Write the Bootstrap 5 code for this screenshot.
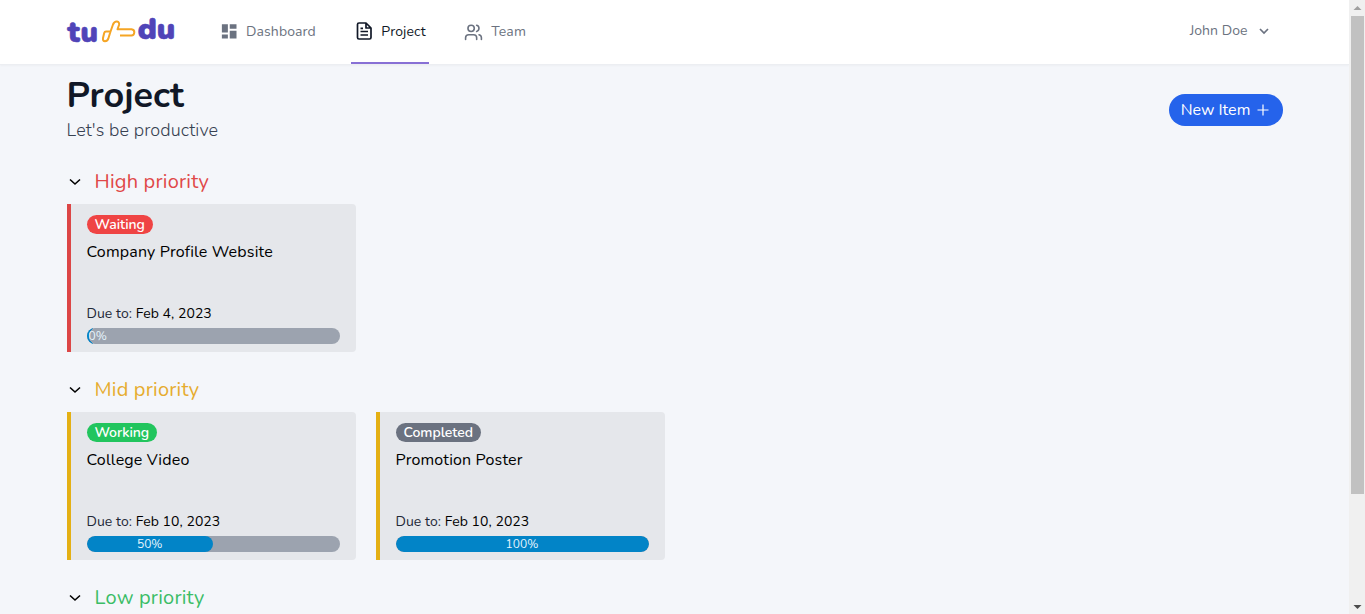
<!DOCTYPE html>
<html lang="en">
<head>
<meta charset="utf-8">
<meta name="viewport" content="width=device-width, initial-scale=1">
<title>Project</title>
<link href="https://cdn.jsdelivr.net/npm/bootstrap@5.3.0/dist/css/bootstrap.min.css" rel="stylesheet">
<style>
body{font-family:Nunito,Lato,sans-serif;background:#f4f6fa;color:#000;height:614px;overflow:hidden}
.page{width:1349px;height:614px;overflow:hidden}
.wrap{width:1216px;margin:0 0 0 66.5px}
.topbar{height:65px;background:#fff;border-bottom:1px solid #eceef2;box-shadow:0 1px 2px rgba(0,0,0,.03)}
.logo{width:109px;height:30px;display:block;overflow:visible}
.tab{height:64px;font-size:14px;color:#6b7280;border-bottom:2px solid transparent;text-decoration:none;letter-spacing:.1px}
.tab.on{color:#111827;border-color:#8870d5}
.tab,.who{font-weight:380}
.who{font-size:14px;color:#6b7280;letter-spacing:.05px}
.big{font-size:36px;line-height:40px;font-weight:700;color:#111827}
.sub{font-size:18px;line-height:28px;color:#374151;font-weight:330;letter-spacing:.1px}
.newbtn{width:114px;height:32px;background:#2563eb;color:#fff;font-size:16px;border:0}
.head{height:28px;font-size:20px;line-height:28px;letter-spacing:.2px}
.head svg{width:16px;height:16px;margin:0 13px 0 -1px}
.head span{position:relative;top:1px}
.red{color:#e04848}.yel{color:#e6ac2e}.grn{color:#3bbd66}
.tiles{display:grid;grid-template-columns:repeat(4,289px);gap:20px;margin-top:9px}
.tile{height:148px;background:#e5e7eb;border-left:4px solid;border-radius:0 4px 4px 0;padding:11px 16px 8px;color:#000}
.tile.r{border-color:#dc4646}.tile.y{border-color:#e4b014}
.pill{height:19px;line-height:19px;font-size:14px;font-weight:630;letter-spacing:-.03px;color:#fff;background:#ef4444}
.pill.green{background:#22c55e}.pill.gray{background:#6b7280}
.name{font-size:16px;line-height:24px;margin-top:6px;letter-spacing:.16px}
.due{font-size:14px;line-height:20px;margin-bottom:4px;letter-spacing:.06px}
.due span{color:#1f2937;font-weight:380}
.bar{height:16px;background:#9ca3af;border-radius:8px;flex-shrink:0;overflow:hidden}
.fill{height:16px;background:#0284c7;border-radius:8px;font-size:12px;line-height:16px;color:#e6f5fd;text-align:center}
.fill.zero{background:radial-gradient(circle at 10px 8px,#9ca3af 8px,#0284c7 8.500px);width:6px;border-radius:0;padding-left:2px;text-align:left}
.scroll{position:fixed;right:0;top:0;width:16px;height:614px;background:#f0f0f0}
.thumb{width:13px;height:478px;background:#c1c1c1;margin-left:2px}
</style>
</head>
<body>
<div class="page">
<header class="topbar">
 <div class="wrap d-flex justify-content-between">
  <nav class="d-flex">
   <a href="#" class="pt-3 text-decoration-none"><svg class="logo" viewBox="67 16 109 30"><g fill="#5044b8" stroke="#5044b8" stroke-width=".6" font-family="Nunito,Lato,sans-serif" font-weight="900" font-size="29"><text x="67.500" y="41.500" textLength="30.500" lengthAdjust="spacing">tu</text><text x="137.800" y="39" textLength="37.500" lengthAdjust="spacingAndGlyphs">du</text></g><path d="M106 31.500H110.500L108.500 38Q107.700 41.200 105 41.200Q102.500 41.200 103 38L104.200 33Q104.600 31.500 106 31.500ZM110 33L113 24.500Q114.300 21.300 117 21.500Q119.700 22 119 25L117.500 29.300H131.500Q134.500 29.600 134.300 32.500Q134 35.500 131.500 35.500H120" fill="none" stroke="#f5a524" stroke-width="2" stroke-linejoin="round"/></svg></a>
   <a href="#" class="tab d-flex align-items-center" style="margin-left:44.500px"><svg width="18" height="18" viewBox="0 0 24 24" fill="#6b7280" class="me-2"><path d="M2.500 3H10.500V14H2.500zM13 3h9v6h-9zM2.500 16.500H10.500V22H2.500zM13 11.500h9V22h-9z"/></svg><span>Dashboard</span></a>
   <a href="#" class="tab on d-flex align-items-center" style="margin-left:35.500px;width:78px;padding-left:4px"><svg width="18" height="20" viewBox="0 0 18 20" fill="none" stroke="#111827" stroke-width="1.700" class="me-2"><path d="M4 2H11L16 7V16.500Q16 18 14.500 18H4Q2.500 18 2.500 16.500V3.500Q2.500 2 4 2ZM11 2V7H16M5.500 7.300H8M5.500 10.500H13M5.500 14H13" stroke-linejoin="round"/></svg><span>Project</span></a>
   <a href="#" class="tab d-flex align-items-center" style="margin-left:35px"><svg width="19" height="19" viewBox="0 0 24 24" fill="none" stroke="#6b7280" stroke-width="2" stroke-linecap="round" class="me-2"><path d="M2 22V20a4 4 0 0 1 4-4h6a4 4 0 0 1 4 4v2M16 4.200a4 4 0 0 1 0 7.700M22 22v-2a4 4 0 0 0-3-3.800"/><circle cx="9" cy="8" r="4"/></svg><span>Team</span></a>
  </nav>
  <div class="who d-flex align-items-center" style="margin-right:14px;height:61px"><span>John Doe</span><svg width="10" height="8" viewBox="0 0 10 8" fill="none" stroke="#6b7280" stroke-width="1.700" style="margin-left:11px"><path d="M1 2L5 6L9 2"/></svg></div>
 </div>
</header>
<main class="wrap">
 <div class="d-flex justify-content-between" style="padding-top:11px;height:102px">
  <div><h1 class="big m-0">Project</h1><p class="sub m-0">Let's be productive</p></div>
  <button class="newbtn rounded-pill p-0 d-flex align-items-center justify-content-center" style="margin-top:18px"><span>New Item</span><svg width="12" height="12" viewBox="0 0 12 12" stroke="#fff" stroke-width="1.200" style="margin:0 1px 0 7px"><path d="M6 .5v11M.5 6h11"/></svg></button>
 </div>
 <section style="height:208px">
  <h2 class="head red m-0 fw-normal d-flex align-items-center"><svg viewBox="0 0 16 16" fill="none" stroke="#000" stroke-width="1.600"><path d="M4 6.500L9 11L14 6.500"/></svg><span>High priority</span></h2>
  <div class="tiles">
   <article class="tile r d-flex flex-column align-items-start"><span class="pill rounded-pill px-2">Waiting</span><div class="name">Company Profile Website</div><div class="due mt-auto"><span>Due to:</span> <b class="fw-normal">Feb 4, 2023</b></div><div class="bar w-100"><div class="fill zero">0%</div></div></article>
  </div>
 </section>
 <section style="height:208px">
  <h2 class="head yel m-0 fw-normal d-flex align-items-center"><svg viewBox="0 0 16 16" fill="none" stroke="#000" stroke-width="1.600"><path d="M4 6.500L9 11L14 6.500"/></svg><span>Mid priority</span></h2>
  <div class="tiles">
   <article class="tile y d-flex flex-column align-items-start"><span class="pill green rounded-pill px-2">Working</span><div class="name">College Video</div><div class="due mt-auto"><span>Due to:</span> <b class="fw-normal">Feb 10, 2023</b></div><div class="bar w-100"><div class="fill" style="width:50%">50%</div></div></article>
   <article class="tile y d-flex flex-column align-items-start"><span class="pill gray rounded-pill px-2">Completed</span><div class="name">Promotion Poster</div><div class="due mt-auto"><span>Due to:</span> <b class="fw-normal">Feb 10, 2023</b></div><div class="bar w-100"><div class="fill" style="width:100%">100%</div></div></article>
  </div>
 </section>
 <section>
  <h2 class="head grn m-0 fw-normal d-flex align-items-center"><svg viewBox="0 0 16 16" fill="none" stroke="#000" stroke-width="1.600"><path d="M4 6.500L9 11L14 6.500"/></svg><span>Low priority</span></h2>
 </section>
</main>
</div>
<div class="scroll d-flex flex-column"><svg width="16" height="16"><path d="M4.500 10L8.500 6L12.500 10Z" fill="#a0a0a0"/></svg><div class="thumb"></div><svg class="mt-auto" width="16" height="16"><path d="M4.500 7L8.500 11L12.500 7Z" fill="#4c4c4c"/></svg></div>
<script src="https://cdn.jsdelivr.net/npm/bootstrap@5.3.0/dist/js/bootstrap.bundle.min.js"></script>
</body>
</html>
